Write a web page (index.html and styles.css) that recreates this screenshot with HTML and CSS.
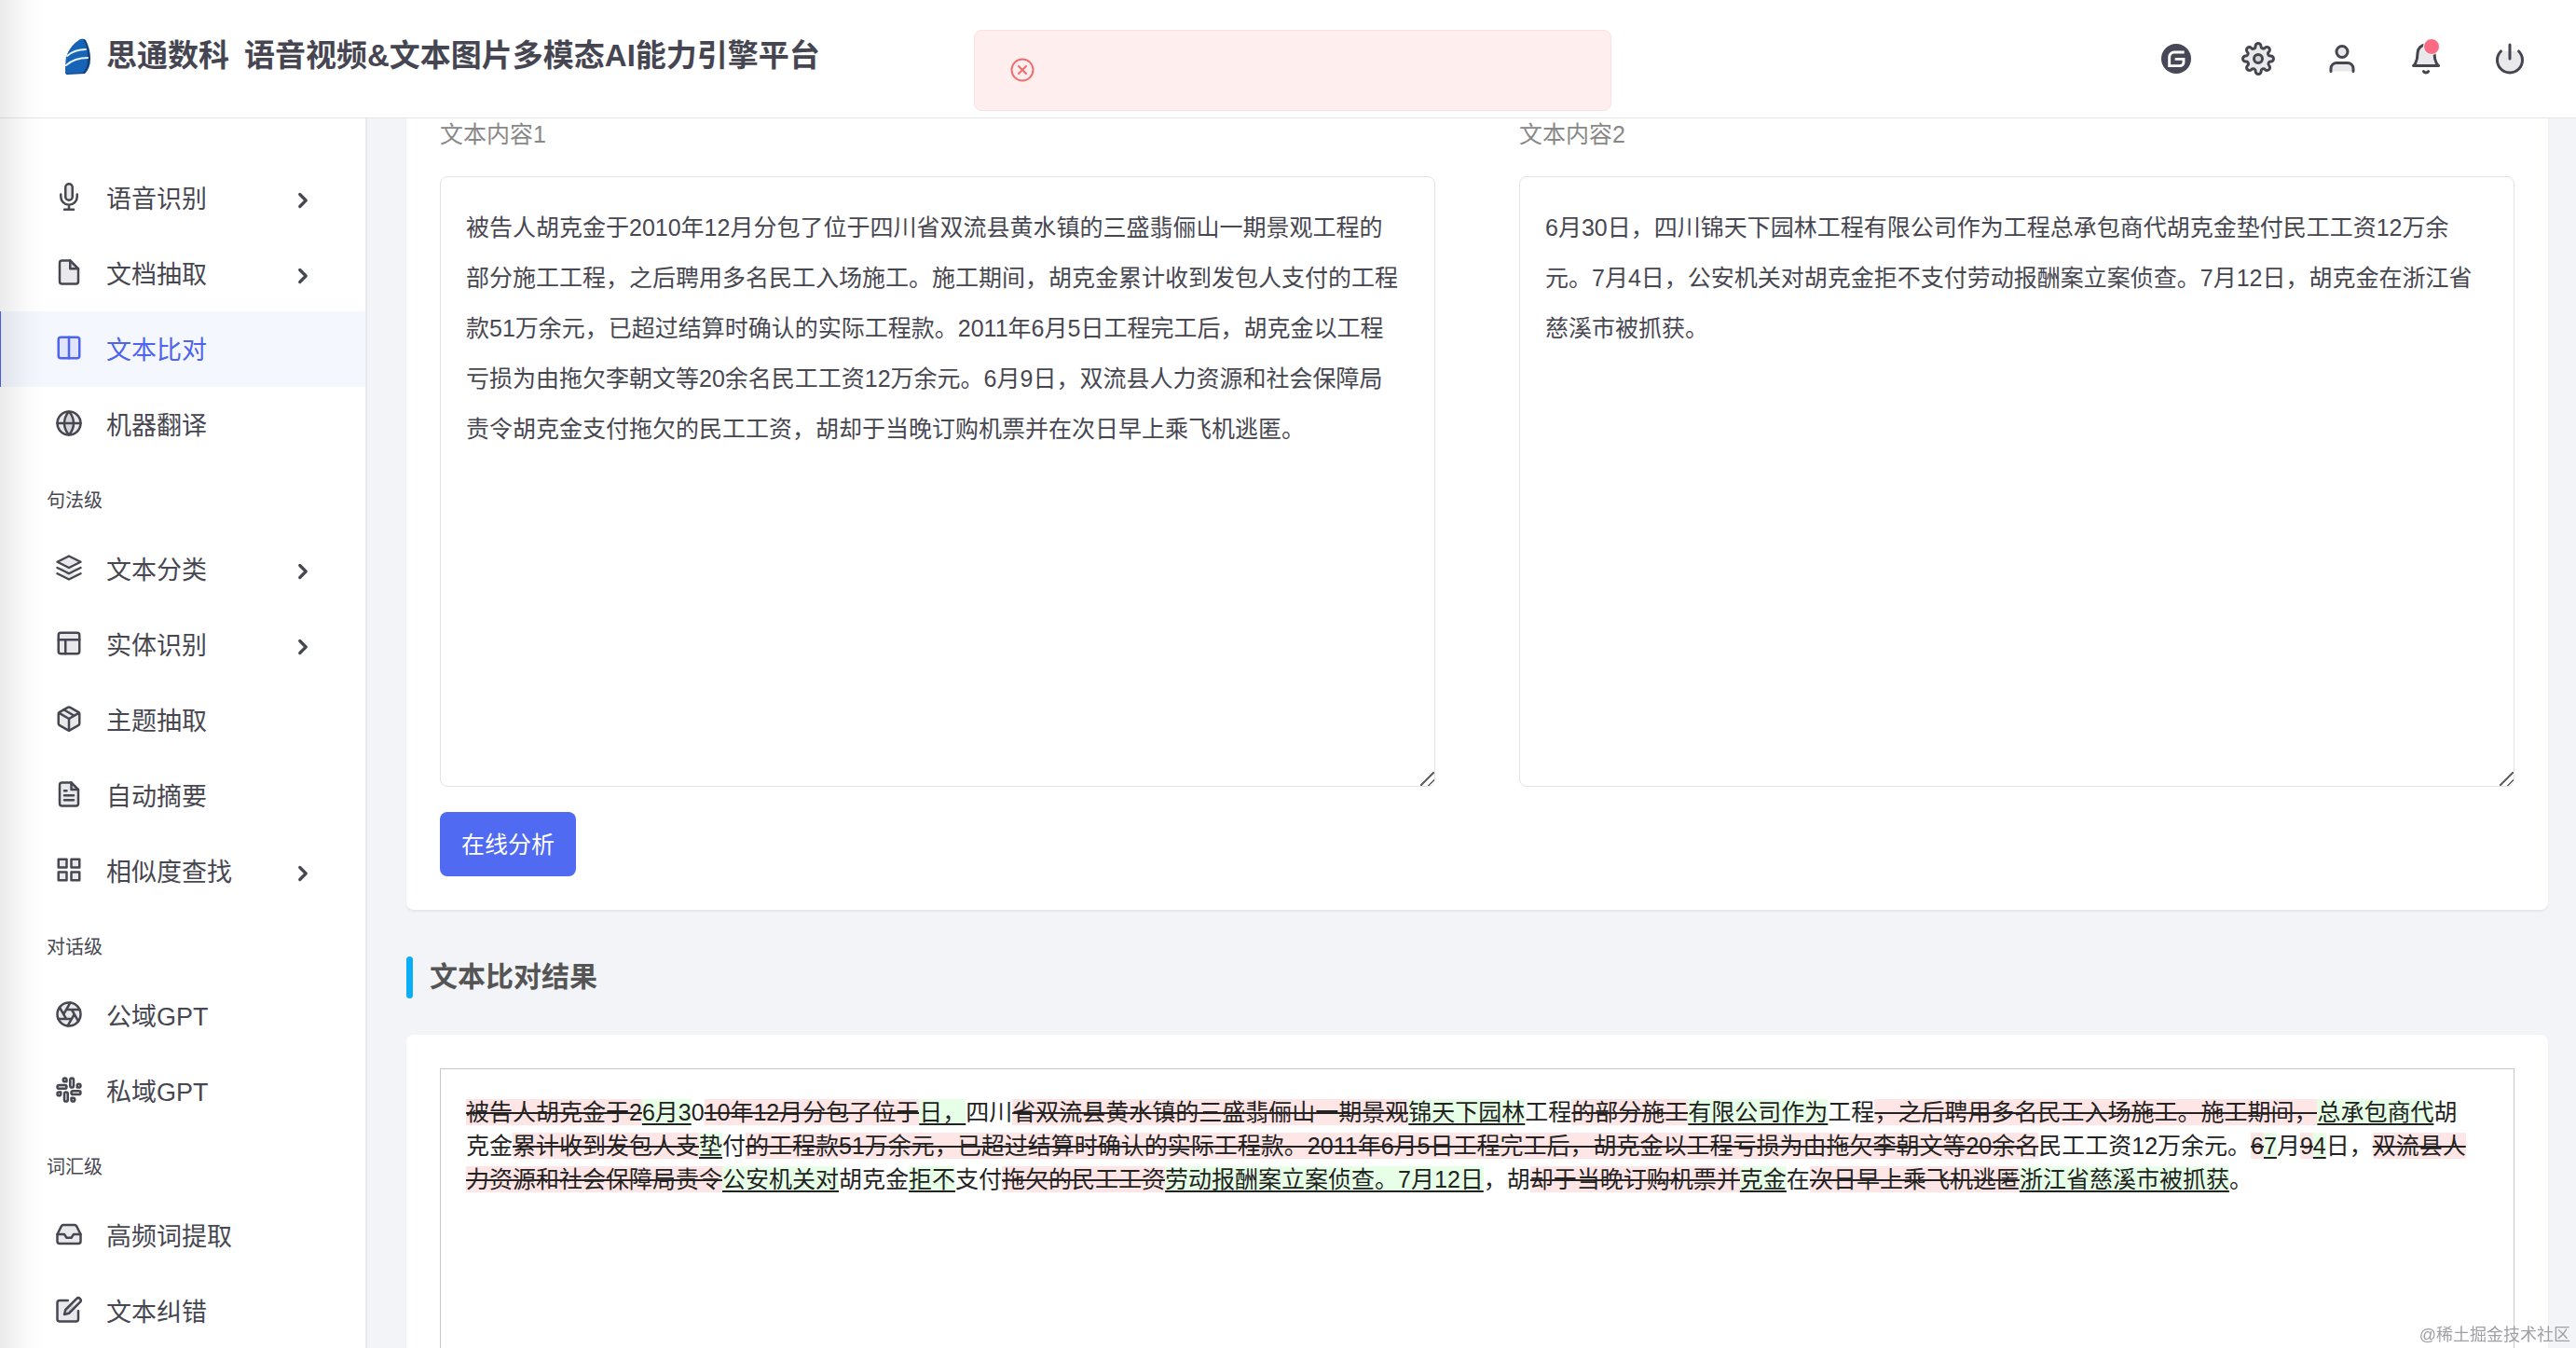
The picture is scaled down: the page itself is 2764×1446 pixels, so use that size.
FILE: index.html
```html
<!DOCTYPE html>
<html lang="zh-CN">
<head>
    <meta charset="UTF-8">
    <meta name="viewport" content="width=device-width, initial-scale=1.0">
    <title>文本比对</title>
    <link rel="stylesheet" href="styles.css">
</head>
<body>
    <header class="header">
        <a class="brand" href="#">
            <svg class="logo" viewBox="0 0 28 40">
                <path d="M17 1 Q20 0 22 2 Q27 12 27 22 Q27 32 21 38 L2 39 Q0 39 0 36 L1 20 Q5 8 17 1Z" fill="#12407f"/>
                <path d="M16 1 Q19 0 20 2 Q25 12 24 22 Q24 32 19 37 L2 38 Q0 38 0 36 L1 20 Q5 8 16 1Z" fill="#1763b5"/>
                <path d="M2 19 Q10 12 22 12 M1 29 Q10 21 24 21" fill="none" stroke="#e6f2fc" stroke-width="2"/>
            </svg>
            <span>思通数科</span>
            <span>语音视频&amp;文本图片多模态AI能力引擎平台</span>
        </a>
        <div class="tools">
            <button class="tool gitee" aria-label="Gitee">
                <svg viewBox="0 0 24 24"><circle cx="12" cy="12" r="12" fill="#474757" stroke="none"/><path d="M18.500 6.700h-8a4 4 0 0 0-4 4v7h8.600a2.900 2.900 0 0 0 2.900-2.900v-2.500h-7" fill="none" stroke="#fff" stroke-width="2.200" stroke-linecap="butt" stroke-linejoin="miter"/></svg>
            </button>
            <button class="tool" aria-label="设置">
                <svg viewBox="0 0 24 24"><circle cx="12" cy="12" r="3"/><path d="M19.4 15a1.65 1.65 0 0 0 .33 1.82l.06.06a2 2 0 0 1-2.83 2.83l-.06-.06a1.65 1.65 0 0 0-2.8 1.17V21a2 2 0 0 1-4 0v-.09A1.65 1.65 0 0 0 7.2 19.73l-.06.06a2 2 0 0 1-2.83-2.83l.06-.06A1.65 1.65 0 0 0 3.09 14H3a2 2 0 0 1 0-4h.09A1.65 1.65 0 0 0 4.27 7.2l-.06-.06a2 2 0 0 1 2.83-2.83l.06.06A1.65 1.65 0 0 0 10 3.09V3a2 2 0 0 1 4 0v.09a1.65 1.65 0 0 0 2.8 1.18l.06-.06a2 2 0 0 1 2.83 2.83l-.06.06A1.65 1.65 0 0 0 20.91 10H21a2 2 0 0 1 0 4h-.09a1.65 1.65 0 0 0-1.51 1z"/></svg>
            </button>
            <button class="tool" aria-label="用户">
                <svg viewBox="0 0 24 24"><path d="M20 21v-2a4 4 0 0 0-4-4H8a4 4 0 0 0-4 4v2"/><circle cx="12" cy="7" r="4"/></svg>
            </button>
            <button class="tool" aria-label="通知">
                <svg viewBox="0 0 24 24"><path d="M18 8A6 6 0 0 0 6 8c0 7-3 9-3 9h18s-3-2-3-9"/><path d="M13.73 21a2 2 0 0 1-3.46 0"/></svg>
                <span class="dot"></span>
            </button>
            <button class="tool" aria-label="退出">
                <svg viewBox="0 0 24 24"><path d="M18.36 6.64a9 9 0 1 1-12.73 0"/><path d="M12 2v10"/></svg>
            </button>
        </div>
    </header>

    <div class="message" role="alert">
        <svg viewBox="0 0 26 26"><circle cx="13" cy="13" r="11.5"/><path d="M9 9l8 8M17 9l-8 8"/></svg>
    </div>

    <div class="layout">
        <nav class="sidebar">
            <a class="item" href="#">
                <svg viewBox="0 0 24 24"><path d="M12 1a3 3 0 0 0-3 3v8a3 3 0 0 0 6 0V4a3 3 0 0 0-3-3z"/><path class="line" d="M19 10v2a7 7 0 0 1-14 0v-2M12 19v4M8 23h8"/></svg>
                <span>语音识别</span>
                <svg class="arrow" viewBox="0 0 24 24"><path d="M9 18l6-6-6-6"/></svg>
            </a>
            <a class="item" href="#">
                <svg viewBox="0 0 24 24"><path d="M13 2H6a2 2 0 0 0-2 2v16a2 2 0 0 0 2 2h12a2 2 0 0 0 2-2V9z"/><path d="M13 2v7h7"/></svg>
                <span>文档抽取</span>
                <svg class="arrow" viewBox="0 0 24 24"><path d="M9 18l6-6-6-6"/></svg>
            </a>
            <a class="item active" href="#">
                <svg viewBox="0 0 24 24"><rect x="3" y="3" width="18" height="18" rx="2"/><path d="M12 3v18"/></svg>
                <span>文本比对</span>
            </a>
            <a class="item" href="#">
                <svg viewBox="0 0 24 24"><circle cx="12" cy="12" r="10"/><path d="M2 12h20"/><path d="M12 2a15.3 15.3 0 0 1 4 10 15.3 15.3 0 0 1-4 10 15.3 15.3 0 0 1-4-10 15.3 15.3 0 0 1 4-10z"/></svg>
                <span>机器翻译</span>
            </a>
            <div class="group">句法级</div>
            <a class="item" href="#">
                <svg viewBox="0 0 24 24"><path d="M12 2L2 7l10 5 10-5z"/><path d="M2 17l10 5 10-5"/><path d="M2 12l10 5 10-5"/></svg>
                <span>文本分类</span>
                <svg class="arrow" viewBox="0 0 24 24"><path d="M9 18l6-6-6-6"/></svg>
            </a>
            <a class="item" href="#">
                <svg viewBox="0 0 24 24"><rect x="3" y="3" width="18" height="18" rx="2"/><path d="M3 9h18M9 21V9"/></svg>
                <span>实体识别</span>
                <svg class="arrow" viewBox="0 0 24 24"><path d="M9 18l6-6-6-6"/></svg>
            </a>
            <a class="item" href="#">
                <svg viewBox="0 0 24 24"><path d="M21 16V8a2 2 0 0 0-1-1.73l-7-4a2 2 0 0 0-2 0l-7 4A2 2 0 0 0 3 8v8a2 2 0 0 0 1 1.73l7 4a2 2 0 0 0 2 0l7-4A2 2 0 0 0 21 16z"/><path class="line" d="M16.5 9.4l-9-5.19M3.27 6.96L12 12.01l8.73-5.05M12 22.08V12"/></svg>
                <span>主题抽取</span>
            </a>
            <a class="item" href="#">
                <svg viewBox="0 0 24 24"><path d="M14 2H6a2 2 0 0 0-2 2v16a2 2 0 0 0 2 2h12a2 2 0 0 0 2-2V8z"/><path d="M14 2v6h6"/><path d="M16 13H8M16 17H8M10 9H8"/></svg>
                <span>自动摘要</span>
            </a>
            <a class="item" href="#">
                <svg viewBox="0 0 24 24"><path d="M3 3h7v7H3zM14 3h7v7h-7zM14 14h7v7h-7zM3 14h7v7H3z"/></svg>
                <span>相似度查找</span>
                <svg class="arrow" viewBox="0 0 24 24"><path d="M9 18l6-6-6-6"/></svg>
            </a>
            <div class="group">对话级</div>
            <a class="item" href="#">
                <svg viewBox="0 0 24 24"><circle cx="12" cy="12" r="10"/><path class="line" d="M14.31 8l5.74 9.94M9.69 8h11.48M7.38 12l5.74-9.94M9.69 16L3.95 6.06M14.31 16H2.83M16.62 12l-5.74 9.94"/></svg>
                <span>公域GPT</span>
            </a>
            <a class="item" href="#">
                <svg viewBox="0 0 24 24"><path d="M14.5 10c-.83 0-1.5-.67-1.5-1.5v-5c0-.83.67-1.5 1.5-1.5s1.5.67 1.5 1.5v5c0 .83-.67 1.5-1.5 1.5z"/><path d="M20.5 10H19V8.5c0-.83.67-1.5 1.5-1.5s1.5.67 1.5 1.5-.67 1.5-1.5 1.5z"/><path d="M9.5 14c.83 0 1.5.67 1.5 1.5v5c0 .83-.67 1.5-1.5 1.5S8 21.33 8 20.5v-5c0-.83.67-1.5 1.5-1.5z"/><path d="M3.5 14H5v1.5c0 .83-.67 1.5-1.5 1.5S2 16.33 2 15.5 2.67 14 3.5 14z"/><path d="M14 14.5c0-.83.67-1.5 1.5-1.5h5c.83 0 1.5.67 1.5 1.5s-.67 1.5-1.5 1.5h-5c-.83 0-1.5-.67-1.5-1.5z"/><path d="M15.5 19H14v1.5c0 .83.67 1.5 1.5 1.5s1.5-.67 1.5-1.5-.67-1.5-1.5-1.5z"/><path d="M10 9.5C10 8.67 9.33 8 8.5 8h-5C2.67 8 2 8.67 2 9.5S2.67 11 3.5 11h5c.83 0 1.5-.67 1.5-1.5z"/><path d="M8.5 5H10V3.5C10 2.67 9.33 2 8.5 2S7 2.67 7 3.5 7.67 5 8.5 5z"/></svg>
                <span>私域GPT</span>
            </a>
            <div class="group">词汇级</div>
            <a class="item" href="#">
                <svg viewBox="0 0 24 24"><path class="line" d="M22 12h-6l-2 3h-4l-2-3H2"/><path d="M5.45 5.11L2 12v6a2 2 0 0 0 2 2h16a2 2 0 0 0 2-2v-6l-3.45-6.89A2 2 0 0 0 16.76 4H7.24a2 2 0 0 0-1.79 1.11z"/></svg>
                <span>高频词提取</span>
            </a>
            <a class="item" href="#">
                <svg viewBox="0 0 24 24"><path d="M11 4H4a2 2 0 0 0-2 2v14a2 2 0 0 0 2 2h14a2 2 0 0 0 2-2v-7"/><path d="M18.5 2.5a2.121 2.121 0 0 1 3 3L12 15l-4 1 1-4 9.5-9.5z"/></svg>
                <span>文本纠错</span>
            </a>
        </nav>

        <main class="content">
            <section class="card form-card">
                <div class="columns">
                    <div class="field">
                        <label for="text1">文本内容1</label>
                        <textarea id="text1" spellcheck="false">被告人胡克金于2010年12月分包了位于四川省双流县黄水镇的三盛翡俪山一期景观工程的部分施工工程，之后聘用多名民工入场施工。施工期间，胡克金累计收到发包人支付的工程款51万余元，已超过结算时确认的实际工程款。2011年6月5日工程完工后，胡克金以工程亏损为由拖欠李朝文等20余名民工工资12万余元。6月9日，双流县人力资源和社会保障局责令胡克金支付拖欠的民工工资，胡却于当晚订购机票并在次日早上乘飞机逃匿。</textarea>
                    </div>
                    <div class="field">
                        <label for="text2">文本内容2</label>
                        <textarea id="text2" spellcheck="false">6月30日，四川锦天下园林工程有限公司作为工程总承包商代胡克金垫付民工工资12万余元。7月4日，公安机关对胡克金拒不支付劳动报酬案立案侦查。7月12日，胡克金在浙江省慈溪市被抓获。</textarea>
                    </div>
                </div>
                <button class="submit">在线分析</button>
            </section>

            <h2 class="title"><span>文本比对结果</span></h2>

            <section class="card result-card">
                <div class="result"><del>被告人胡克金于2</del><ins>6月3</ins>0<del>10年12月分包了位于</del><ins>日，</ins>四川<del>省双流县黄水镇的三盛翡俪山一期景观</del><ins>锦天下园林</ins>工程<del>的部分施工</del><ins>有限公司作为</ins>工程<del>，之后聘用多名民工入场施工。施工期间，</del><ins>总承包商代</ins>胡克金<del>累计收到发包人支</del><ins>垫</ins>付<del>的工程款51万余元，已超过结算时确认的实际工程款。2011年6月5日工程完工后，胡克金以工程亏损为由拖欠李朝文等20余名</del>民工工资12万余元。<del>6</del><ins>7</ins>月<del>9</del><ins>4</ins>日，<del>双流县人力资源和社会保障局责令</del><ins>公安机关对</ins>胡克金<ins>拒不</ins>支付<del>拖欠的民工工资</del><ins>劳动报酬案立案侦查。7月12日</ins>，胡<del>却于当晚订购机票并</del><ins>克金</ins>在<del>次日早上乘飞机逃匿</del><ins>浙江省慈溪市被抓获</ins>。</div>
            </section>
        </main>
    </div>

    <div class="watermark">@稀土掘金技术社区</div>
</body>
</html>
```
FILE: styles.css
```css
* {
    box-sizing: border-box;
}

body {
    display: flex;
    flex-direction: column;
    height: 100vh;
    margin: 0;
    overflow: hidden;
    background-color: #f2f4f8;
    color: #474751;
    font-family: "Liberation Sans", "Noto Sans CJK SC", sans-serif;
    font-size: 25px;
}

/* shade along the left edge of the window */
body::before {
    content: "";
    position: fixed;
    top: 0;
    bottom: 0;
    left: 0;
    z-index: 10;
    width: 48px;
    background: linear-gradient(to right, rgba(0, 0, 0, 0.08), rgba(0, 0, 0, 0.02) 60%, transparent);
    pointer-events: none;
}

a {
    color: inherit;
    text-decoration: none;
}

button {
    border: none;
    font-family: inherit;
    cursor: pointer;
}

svg {
    display: block;
    flex: none;
    fill: rgba(71, 71, 87, 0.12);
    stroke: currentColor;
    stroke-width: 2;
    stroke-linecap: round;
    stroke-linejoin: round;
}

.line {
    fill: none;
}

.header {
    display: flex;
    flex: none;
    align-items: center;
    justify-content: space-between;
    height: 127px;
    padding: 0 53px 0 70px;
    background-color: #fff;
    border-bottom: 1px solid #e4e5e7;
}

.brand {
    display: flex;
    align-items: center;
    gap: 16px;
    padding-bottom: 12px;
    color: #464652;
    font-size: 33px;
    font-weight: bold;
}

.logo {
    width: 28px;
    height: 40px;
    margin-top: 8px;
    stroke: none;
}

.tools {
    display: flex;
    align-items: center;
    gap: 54px;
}

.tool {
    position: relative;
    padding: 0;
    background: none;
    color: #45454f;
}

.tool svg {
    width: 36px;
    height: 36px;
}

.gitee svg {
    width: 32px;
    height: 32px;
}

.dot {
    position: absolute;
    top: -4px;
    right: 3px;
    width: 18px;
    height: 18px;
    background-color: #fb6b84;
    border: 1px solid #fff;
    border-radius: 50%;
}

.message {
    position: fixed;
    top: 32px;
    left: calc(50% - 337px);
    z-index: 5;
    display: flex;
    align-items: center;
    width: 684px;
    height: 87px;
    padding: 0 38px 2px;
    background-color: #feeeee;
    border: 1px solid #fbdfe2;
    border-radius: 8px;
    color: #f06c6e;
}

.message svg {
    width: 26px;
    height: 26px;
    fill: none;
}

.layout {
    display: flex;
    flex: 1;
    min-height: 0;
}

.sidebar {
    flex: none;
    width: 394px;
    padding-top: 45px;
    overflow: hidden;
    background-color: #fff;
    border-right: 2px solid #e8eaee;
}

.item {
    display: flex;
    align-items: center;
    height: 81px;
    padding: 0 54px 3px 58px;
    border-left: 1px solid transparent;
    font-size: 27px;
}

.item svg {
    width: 30px;
    height: 30px;
    margin-right: 25px;
}

.item .arrow {
    width: 26px;
    height: 26px;
    margin: 8px 0 0 auto;
    fill: none;
    stroke-width: 3;
}

.item.active {
    background-color: #f5f7ff;
    border-left-color: #4e63ee;
    color: #4e63ee;
}

.item.active svg {
    fill: rgba(78, 99, 238, 0.12);
}

.group {
    height: 74px;
    padding: 9px 0 0 50px;
    font-size: 20px;
    line-height: 65px;
}

.content {
    flex: 1;
    min-width: 0;
    padding: 0 30px 0 42px;
    overflow-y: auto;
    scrollbar-width: none;
}

.card {
    padding: 36px;
    background-color: #fff;
    border-radius: 8px;
    box-shadow: 0 2px 2px rgba(0, 0, 0, 0.06);
}

.form-card {
    padding-top: 0;
    border-radius: 0 0 8px 8px;
}

.columns {
    display: grid;
    grid-template-columns: 1fr 1fr;
    gap: 90px;
}

.field label {
    display: block;
    margin-bottom: 28px;
    color: #888;
    line-height: 34px;
}

.field textarea {
    display: block;
    width: 100%;
    height: 655px;
    padding: 27px 32px 27px 27px;
    background-color: #fff;
    border: 1px solid #e2e3e6;
    border-radius: 8px;
    color: #474751;
    font-family: inherit;
    font-size: 25px;
    line-height: 54px;
    outline: none;
}

.field textarea::-webkit-resizer {
    background: linear-gradient(135deg, transparent 46%, #666 46%, #666 54%, transparent 54%, transparent 74%, #666 74%, #666 82%, transparent 82%);
}

.submit {
    display: block;
    height: 69px;
    margin-top: 27px;
    padding: 0 23px 3px;
    background-color: #516af2;
    border-radius: 8px;
    color: #fff;
    font-size: 25px;
}

.title {
    display: flex;
    align-items: center;
    gap: 18px;
    height: 45px;
    margin: 50px 0 39px;
    color: #555;
    font-size: 30px;
}

.title span {
    padding-bottom: 8px;
}

.title::before {
    content: "";
    width: 7px;
    height: 45px;
    background-color: #0aaef8;
    border-radius: 4px;
}

.result {
    min-height: 700px;
    padding: 28px 40px 28px 27px;
    border: 1px solid #c8c8c8;
    color: #222;
    line-height: 36px;
}

.result del,
.result ins {
    text-decoration-thickness: 2px;
    text-decoration-skip-ink: none;
}

.result del {
    background-color: #ffe6e6;
}

.result ins {
    background-color: #e6ffe6;
    text-underline-offset: 3px;
}

.watermark {
    position: fixed;
    right: 6px;
    bottom: 3px;
    color: #a0a0a4;
    font-size: 18px;
}
```
